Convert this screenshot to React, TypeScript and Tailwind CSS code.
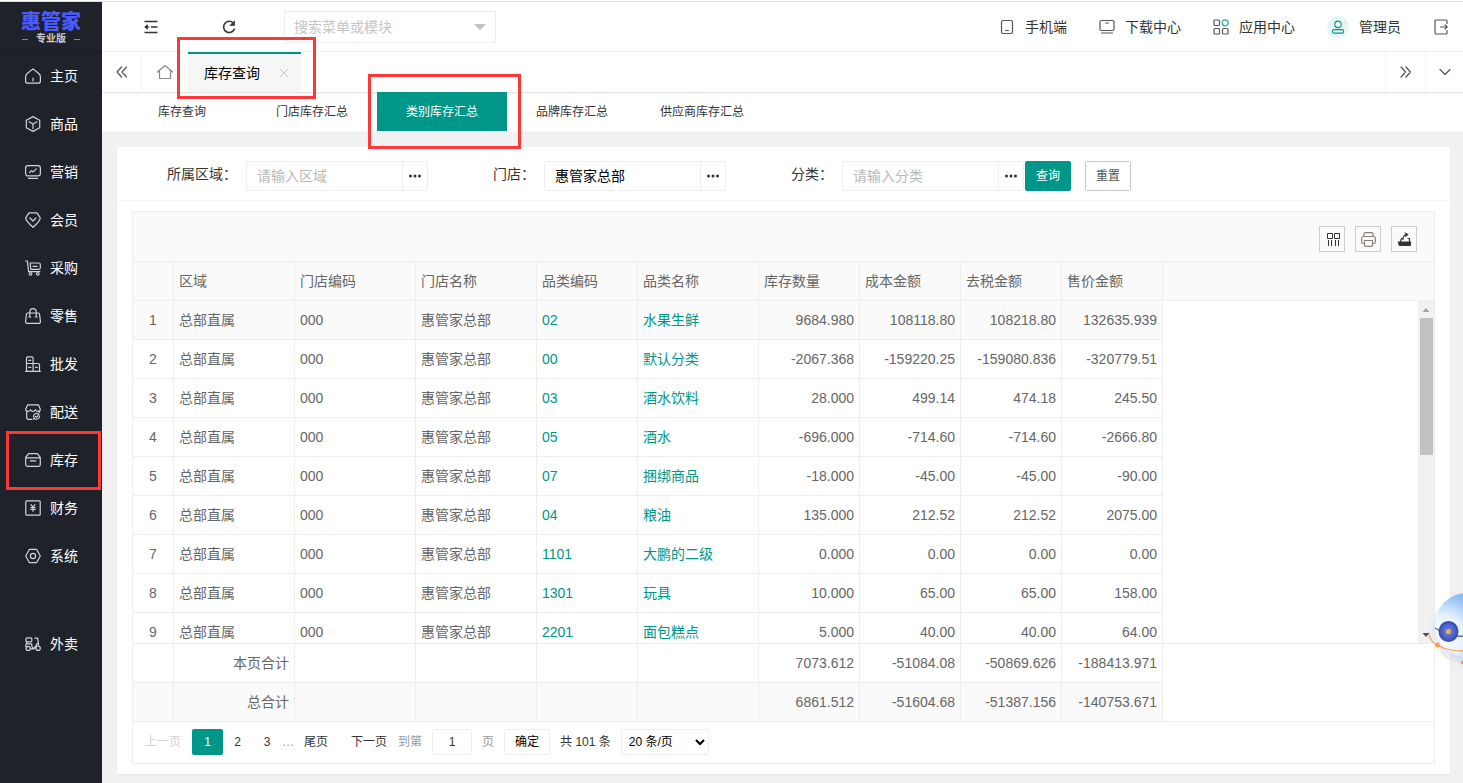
import type { ReactNode } from 'react';
import { clsx } from 'clsx';

type IconProps = { children: ReactNode; className?: string };

function Icon({ children, className = 'size-4' }: IconProps) {
  return (
    <svg
      viewBox="0 0 16 16"
      className={clsx('shrink-0', className)}
      fill="none"
      stroke="currentColor"
      strokeWidth="1.2"
      strokeLinecap="round"
      strokeLinejoin="round"
      aria-hidden="true"
    >
      {children}
    </svg>
  );
}

const menu = [
  {
    name: '主页',
    icon: <path d="M2.5 5.3 8 .9l5.500 4.400c1 .8 1.900 2 1.900 3.400v4.200c0 1.400-.9 2.300-2.300 2.300H2.900C1.500 15.200.6 14.300.6 12.900V8.700c0-1.400.9-2.600 1.900-3.400ZM8 10v3" />,
  },
  {
    name: '商品',
    icon: <path d="m8 .6 6.700 3.600v7.600L8 15.400l-6.700-3.600V4.200L8 .6ZM4 5.800l4 2.300 4-2.300M8 8.100v4.600" />,
  },
  {
    name: '营销',
    icon: <path d="M3 1.600h10c1.400 0 2.400 1 2.400 2.400v5.500c0 1.400-1 2.400-2.400 2.400H3C1.600 11.900.6 10.900.6 9.500V4C.6 2.600 1.600 1.600 3 1.600ZM4.500 8.700l2-2 1.700 1.200 3-3M3.500 14.400h9" />,
  },
  {
    name: '会员',
    icon: <path d="M4 .8h8l3.300 5.100c-.3 3-4.300 6.800-7.300 9.400C5 12.700 1 8.900.7 5.900L4 .8ZM5 6l3 3 3-3" />,
  },
  {
    name: '采购',
    icon: (
      <>
        <path d="M.6 1h1.800l1.200 10.600h11.200M5.300 3h8.500c.9 0 1.500.6 1.500 1.500v3.300c0 .9-.6 1.500-1.500 1.500H5.800L5.200 3ZM8 6.300h4" />
        <circle cx="5.500" cy="13.800" r="1.300" />
        <circle cx="12.800" cy="13.800" r="1.300" />
      </>
    ),
  },
  {
    name: '零售',
    icon: <path d="M2.600 5h10.800c.7 0 1 .3 1.100 1l.9 7c.2 1.500-.5 2.400-1.900 2.400h-11C1.100 15.400.4 14.500.6 13l.9-7c.1-.7.4-1 1.100-1ZM4.800 8.800V4.300C4.800 2.200 6 .7 8 .7s3.200 1.500 3.200 3.600v4.500M3.800 9h2M10.200 9h2" />,
  },
  {
    name: '批发',
    icon: <path d="M.6 15.300h14.800M1.500 15.300V2.200C1.500 1.300 2 .8 2.900.8h3.800c.9 0 1.400.5 1.400 1.400v13.100M8.100 7.500h5c.9 0 1.400.5 1.400 1.400v6.400M3.700 4.300h2.200M1.500 7.500h6.600M3.700 11.300h2.200M10.500 11.300h1.800" />,
  },
  {
    name: '配送',
    icon: (
      <>
        <path d="M7 15.300H3.400c-1 0-1.700-.7-1.700-1.700V7.400M14.300 7.400v1.100M2.600.8h10.800l1.900 4.400c0 1.300-.8 2.200-2.300 2.200-1.400 0-2.200-.7-2.500-1.700-.4 1-1.200 1.700-2.500 1.700s-2.100-.7-2.500-1.700C5.200 6.700 4.400 7.400 3 7.400 1.500 7.400.7 6.500.7 5.200L2.600.8Z" />
        <path d="M8.500 12.400a3 3 0 0 1 5.400-1.800M14.600 12a3 3 0 0 1-5.400 2M10.200 12.300l1.300 1 1.700-2M8.800 15.300v-1.500" />
      </>
    ),
  },
  {
    name: '库存',
    marked: true,
    icon: <path d="M3.600 1.600h8.800l2.900 3.700v7c0 1.300-.8 2.100-2.100 2.100H2.800c-1.300 0-2.100-.8-2.100-2.100v-7l2.900-3.700ZM.7 5.800h14.600M5.300 8.900h5.400" />,
  },
  {
    name: '财务',
    icon: <path d="M1.700.8h12.600c.6 0 .9.3.9.900v12.600c0 .6-.3.900-.9.900H1.700c-.6 0-.9-.3-.9-.9V1.700c0-.6.3-.9.900-.9ZM6 4.700l2 2.500 2-2.500M5.800 7.500h4.400M5.800 9.300h4.400M8 7.300v4" />,
  },
  {
    name: '系统',
    icon: (
      <>
        <path d="M4.500 1.300h7L15.300 8l-3.800 6.700h-7L.7 8l3.800-6.700Z" />
        <circle cx="8" cy="8" r="2.600" />
      </>
    ),
  },
];

const scooter = (
  <>
    <rect x="1" y="1.800" width="5.800" height="4" rx="1" />
    <path d="M.8 10.500V9.300C.8 8.300 1.400 7.800 2.300 7.800h4.500v2.500l1.400 2 2.700-.3M10 2.200h2.700l.9 7M5.300 12.800h3.500l3.600-5.500M1.500 5.800v2" />
    <circle cx="3.200" cy="12.400" r="2.100" />
    <circle cx="13.100" cy="12.200" r="2.200" />
  </>
);

const columns = ['', '区域', '门店编码', '门店名称', '品类编码', '品类名称', '库存数量', '成本金额', '去税金额', '售价金额'];

const rows = [
  ['02', '水果生鲜', '9684.980', '108118.80', '108218.80', '132635.939'],
  ['00', '默认分类', '-2067.368', '-159220.25', '-159080.836', '-320779.51'],
  ['03', '酒水饮料', '28.000', '499.14', '474.18', '245.50'],
  ['05', '酒水', '-696.000', '-714.60', '-714.60', '-2666.80'],
  ['07', '捆绑商品', '-18.000', '-45.00', '-45.00', '-90.00'],
  ['04', '粮油', '135.000', '212.52', '212.52', '2075.00'],
  ['1101', '大鹏的二级', '0.000', '0.00', '0.00', '0.00'],
  ['1301', '玩具', '10.000', '65.00', '65.00', '158.00'],
  ['2201', '面包糕点', '5.000', '40.00', '40.00', '64.00'],
];

const totals = [
  ['本页合计', '7073.612', '-51084.08', '-50869.626', '-188413.971'],
  ['总合计', '6861.512', '-51604.68', '-51387.156', '-140753.671'],
];

const subTabs = ['库存查询', '门店库存汇总', '类别库存汇总', '品牌库存汇总', '供应商库存汇总'];

const cell = 'h-[39px] border-r border-b border-[#eee] px-[5px] whitespace-nowrap';

function Mark({ className }: { className: string }) {
  return <span className={clsx('pointer-events-none absolute z-10 border-3 border-[#fd3838]', className)} />;
}

function Grid({ children, label }: { children: ReactNode; label: string }) {
  return (
    <table aria-label={label} className="w-[1030px] table-fixed border-separate border-spacing-0">
      <colgroup>
        <col className="w-[41px]" />
        <col className="w-[121px]" />
        <col className="w-[121px]" />
        <col className="w-[121px]" />
        <col className="w-[101px]" />
        <col className="w-[121px]" />
        <col className="w-[101px]" />
        <col className="w-[101px]" />
        <col className="w-[101px]" />
        <col className="w-[101px]" />
      </colgroup>
      {children}
    </table>
  );
}

function Sidebar() {
  return (
    <aside className="flex w-[102px] shrink-0 flex-col bg-[#20222a] text-white">
      <div className="flex h-[50px] flex-col items-center pt-[9px] shadow-[0_1px_2px_rgba(0,0,0,0.2)]">
        <div className="text-[20px] leading-[22px] font-black text-[#4a5cff]">惠管家</div>
        <div className="flex items-center gap-2 text-[10px] leading-3 font-bold text-[#ccc]">
          <span className="h-px w-1.5 bg-[#888]" />
          专业版
          <span className="h-px w-1.5 bg-[#888]" />
        </div>
      </div>
      <nav className="flex flex-col">
        {menu.map((item) => (
          <a key={item.name} href="#" className="relative flex h-12 items-center gap-[9px] pl-[25px]">
            <Icon className="size-4 text-[#d2d3d5]">{item.icon}</Icon>
            {item.name}
            {item.marked && <Mark className="-top-[5px] right-px -bottom-[6px] left-1.5" />}
          </a>
        ))}
        <a href="#" className="mt-10 flex h-12 items-center gap-[9px] pl-[25px]">
          <Icon className="size-4 text-[#d2d3d5]">{scooter}</Icon>
          外卖
        </a>
      </nav>
    </aside>
  );
}

function Header() {
  return (
    <header className="flex h-[50px] shrink-0 items-center border-b border-[#f2f2f2] bg-white pr-3.5 pl-[41px] text-[#333]">
      <button type="button" aria-label="收起菜单">
        <Icon>
          <path d="M1.500 2.600h13M8 8h6.500M1.500 13.400h13" strokeWidth="1.500" strokeLinecap="butt" />
          <path d="M2 8h4M4 6 2 8l2 2Z" strokeWidth="1" fill="currentColor" />
        </Icon>
      </button>
      <button type="button" aria-label="刷新" className="ml-[62px]">
        <Icon>
          <path d="M13.300 10.200A5.600 5.600 0 1 1 12.200 4" strokeWidth="1.600" />
          <path d="M13.600 2v4.500H9Z" fill="currentColor" strokeWidth=".6" />
        </Icon>
      </button>
      <div className="ml-[47px] flex h-8 w-[212px] items-center border border-[#eee] px-[9px]">
        <input
          type="text"
          aria-label="搜索菜单或模块"
          placeholder="搜索菜单或模块"
          className="min-w-0 flex-1 outline-none placeholder:text-[#c4c4c4]"
        />
        <svg viewBox="0 0 12 6" className="h-1.5 w-3 fill-[#c2c2c2]" aria-hidden="true">
          <path d="M0 0h12L6 6Z" />
        </svg>
      </div>
      <div className="ml-auto flex items-center gap-8">
        <a href="#" className="flex items-center gap-2.5">
          <Icon className="size-4 text-[#555]">
            <rect x="2.500" y="1.500" width="11" height="13" rx="1.500" />
            <path d="M6.500 11.500h3" />
          </Icon>
          手机端
        </a>
        <a href="#" className="flex items-center gap-2.5">
          <Icon className="size-4 text-[#555]">
            <rect x="1" y="1.500" width="14" height="10" rx="1.500" />
            <path d="M6.500 4h3M2.500 14h11" />
          </Icon>
          下载中心
        </a>
        <a href="#" className="flex items-center gap-2.5">
          <Icon className="size-4 text-[#555]">
            <rect x="1" y="1" width="5.500" height="5.500" rx="1" />
            <rect x="1" y="9.500" width="5.500" height="5.500" rx="1" />
            <rect x="9.500" y="9.500" width="5.500" height="5.500" rx="1" />
            <circle cx="12.200" cy="3.800" r="3" stroke="#26a69a" />
          </Icon>
          应用中心
        </a>
        <a href="#" className="flex items-center gap-2.5">
          <span className="flex size-[22px] items-center justify-center rounded-full bg-[#e8f5f4] text-[#009688]">
            <Icon className="size-3.5">
              <circle cx="8" cy="5" r="3.700" />
              <rect x="1.500" y="11" width="13" height="4" rx="2" />
            </Icon>
          </span>
          管理员
        </a>
        <button type="button" aria-label="退出">
          <Icon className="size-4 text-[#555]">
            <path d="M14 4.500V2c0-.6-.4-1-1-1H3c-.6 0-1 .4-1 1v12c0 .6.400 1 1 1h10c.6 0 1-.4 1-1v-2.500M7.500 8H14M12 5.800 14.200 8 12 10.200" />
          </Icon>
        </button>
      </div>
    </header>
  );
}

function TabBar() {
  return (
    <div className="relative flex h-10 shrink-0 bg-white text-[#555] shadow-[0_1px_2px_rgba(0,0,0,0.15)]">
      <button type="button" aria-label="向左" className="flex w-10 items-center justify-center border-r border-[#f2f2f2]">
        <Icon>
          <path d="M7.500 3 3 8l4.500 5M12.500 3 8 8l4.500 5" />
        </Icon>
      </button>
      <button type="button" aria-label="首页" className="flex w-[46px] items-center justify-center text-[#888]">
        <Icon>
          <path d="M.5 8 8 1.500 15.500 8M2.500 6.500v8h11v-8" />
        </Icon>
      </button>
      <div className="relative flex w-[113px] items-center gap-[18px] border-t-2 border-[#009688] bg-[#f6f6f6] pl-4 text-black">
        库存查询
        <button type="button" aria-label="关闭" className="text-[#c2c2c2]">
          <Icon className="size-3">
            <path d="m3 3 10 10M13 3 3 13" />
          </Icon>
        </button>
        <Mark className="-top-[17px] -right-[15px] -bottom-[7px] -left-[11px]" />
      </div>
      <button type="button" aria-label="向右" className="ml-auto flex w-10 items-center justify-center border-l border-[#f2f2f2]">
        <Icon>
          <path d="m3 3 4.500 5L3 13M8 3l4.500 5L8 13" />
        </Icon>
      </button>
      <button type="button" aria-label="更多" className="flex w-[38px] items-center justify-center border-l border-[#f2f2f2]">
        <Icon>
          <path d="m3 5.500 5 5 5-5" />
        </Icon>
      </button>
    </div>
  );
}

function Field({ id, label, placeholder, value }: { id: string; label: string; placeholder: string; value?: string }) {
  return (
    <div className="flex w-[298px] items-start">
      <label htmlFor={id} className="flex-1 pr-[9px] text-right leading-[26px]">
        {label}：
      </label>
      <div className="flex h-[30px] w-[182px] rounded-xs border border-[#eee]">
        <input
          id={id}
          type="text"
          placeholder={placeholder}
          defaultValue={value}
          className="min-w-0 flex-1 pl-2.5 text-black outline-none placeholder:text-[#b8b8b8]"
        />
        <button type="button" aria-label={`选择${label}`} className="flex w-[25px] items-center justify-center border-l border-[#eee]">
          <svg viewBox="0 0 12 4" className="h-1 w-3 fill-[#333]" aria-hidden="true">
            <circle cx="1.500" cy="2" r="1.500" />
            <circle cx="6" cy="2" r="1.500" />
            <circle cx="10.500" cy="2" r="1.500" />
          </svg>
        </button>
      </div>
    </div>
  );
}

function Filters() {
  return (
    <form className="flex h-[54px] shrink-0 items-start border-b border-[#f6f6f6] pt-3.5 pl-[13px] text-[#333]">
      <Field id="area" label="所属区域" placeholder="请输入区域" />
      <Field id="store" label="门店" placeholder="请输入门店" value="惠管家总部" />
      <Field id="category" label="分类" placeholder="请输入分类" />
      <button type="button" className="ml-px h-[30px] w-[46px] rounded-xs bg-[#009688] text-xs text-white">
        查询
      </button>
      <button type="button" className="ml-3.5 h-[30px] w-[46px] rounded-xs border border-[#c9c9c9] text-xs text-[#555]">
        重置
      </button>
    </form>
  );
}

function Toolbar() {
  const button = 'flex size-[26px] items-center justify-center border border-[#ccc] text-[#333]';
  return (
    <div className="flex h-[50px] shrink-0 items-center justify-end gap-2.5 border-b border-[#eee] bg-[#fafafa] pt-1 pr-[17px]">
      <button type="button" aria-label="筛选列" className={button}>
        <Icon className="size-4">
          <path d="M3.500 2.500h5v5h-5ZM10.500 2.500h5v5h-5ZM4.500 9v6M7.500 9v6M11.500 9v6M14.500 9v6" strokeWidth="1" strokeLinecap="butt" strokeLinejoin="miter" />
        </Icon>
      </button>
      <button type="button" aria-label="打印" className={button}>
        <Icon className="size-4 text-[#8a8079]">
          <path d="M4 5.500V3C4 2.200 4.500 1.700 5.300 1.700h6.400c.8 0 1.300.5 1.300 1.300v2.500M4 12.500H3.200c-1 0-1.500-.6-1.500-1.500V7.500c0-1.200.8-2 2-2h9.600c1.200 0 2 .8 2 2V11c0 .9-.5 1.500-1.500 1.500H13M4.500 9.500h8v4.500c0 .8-.5 1.300-1.300 1.300H5.800c-.8 0-1.300-.5-1.300-1.300V9.500Z" />
        </Icon>
      </button>
      <button type="button" aria-label="导出" className={button}>
        <Icon className="size-4">
          <path d="M2.500 11h12v2.700c0 .5-.3.800-.8.800H4.200c-.7 0-1.200-.5-1.200-1.200Z" fill="currentColor" />
          <path d="M4.500 10.500 5.500 7.500h1.500M13.500 10.500v-3H12M7 8.500C7 6 8 4 10.500 3.500" />
          <path d="m9.300 1.800 3 1.700-2.500 2.200Z" fill="currentColor" strokeWidth=".5" />
        </Icon>
      </button>
    </div>
  );
}

function DataTable() {
  return (
    <div className="flex min-h-0 flex-1 flex-col text-[#666]">
      <div className="shrink-0 border-b border-[#eee] bg-[#fafafa]">
        <Grid label="表头">
          <thead>
            <tr>
              {columns.map((name) => (
                <th key={name} className="h-[38px] border-r border-[#eee] px-[5px] text-left font-normal">
                  {name}
                </th>
              ))}
            </tr>
          </thead>
        </Grid>
      </div>
      <div className="flex min-h-0 flex-1">
        <div className="flex-1 overflow-hidden">
          <Grid label="类别库存汇总">
            <tbody>
              {rows.map(([code, name, ...numbers], i) => (
                <tr key={code} className={clsx(i === 0 && 'bg-[#fafafa]')}>
                  <td className={clsx(cell, 'text-center')}>{i + 1}</td>
                  <td className={cell}>总部直属</td>
                  <td className={cell}>000</td>
                  <td className={cell}>惠管家总部</td>
                  <td className={clsx(cell, 'text-[#009688]')}>{code}</td>
                  <td className={clsx(cell, 'text-[#009688]')}>{name}</td>
                  {numbers.map((n, j) => (
                    <td key={j} className={clsx(cell, 'text-right')}>
                      {n}
                    </td>
                  ))}
                </tr>
              ))}
            </tbody>
          </Grid>
        </div>
        <div className="flex w-4 flex-col items-center bg-[#f1f1f1]">
          <svg viewBox="0 0 16 17" className="h-[17px] w-4 fill-[#a3a3a3]" aria-hidden="true">
            <path d="M8 7 11.500 11h-7Z" />
          </svg>
          <div className="h-[137px] w-[13px] bg-[#c1c1c1]" />
          <svg viewBox="0 0 16 17" className="mt-auto h-[17px] w-4 fill-[#505050]" aria-hidden="true">
            <path d="M4.500 7h7L8 11Z" />
          </svg>
        </div>
      </div>
      <div className="shrink-0 border-t border-[#eee]">
        <Grid label="合计">
          <tbody>
            {totals.map(([name, ...numbers], i) => (
              <tr key={name} className={clsx(i === 1 && 'bg-[#fafafa]')}>
                <td className={cell} />
                <td className={clsx(cell, 'text-right')}>{name}</td>
                <td className={cell} />
                <td className={cell} />
                <td className={cell} />
                <td className={cell} />
                {numbers.map((n, j) => (
                  <td key={j} className={clsx(cell, 'text-right')}>
                    {n}
                  </td>
                ))}
              </tr>
            ))}
          </tbody>
        </Grid>
      </div>
    </div>
  );
}

function Pagination() {
  return (
    <div className="-mt-px flex h-[42px] shrink-0 items-center border-t border-[#eee] pb-0.5 pl-px text-xs text-[#333]">
      <button type="button" disabled className="px-[11px] text-[#d2d2d2]">
        上一页
      </button>
      <button type="button" className="h-[26px] w-[31px] rounded-xs bg-[#009688] text-white">
        1
      </button>
      <button type="button" className="w-[29px]">
        2
      </button>
      <button type="button" className="w-[30px]">
        3
      </button>
      <span className="w-[11px] text-[#999]">…</span>
      <button type="button" className="pr-3 pl-[11px]">
        尾页
      </button>
      <button type="button" className="px-[11px]">
        下一页
      </button>
      <label htmlFor="page" className="pr-2.5 text-[#999]">
        到第
      </label>
      <input id="page" type="text" defaultValue="1" className="h-[26px] w-10 rounded-xs border border-[#eee] text-center" />
      <span className="px-2.5 text-[#999]">页</span>
      <button type="button" className="h-[26px] w-[46px] rounded-xs border border-[#eee] text-black">
        确定
      </button>
      <span className="px-2.5">共 101 条</span>
      <select aria-label="每页条数" className="h-[26px] w-[88px] rounded-xs border border-[#eee] bg-white pl-[3px] text-black">
        <option>20 条/页</option>
      </select>
    </div>
  );
}

function Assistant() {
  return (
    <button type="button" aria-label="智能助手" className="absolute right-0 bottom-28 z-20">
      <svg viewBox="0 0 35 80" className="h-20 w-[35px]" aria-hidden="true">
        <defs>
          <radialGradient id="ball" gradientUnits="userSpaceOnUse" cx="14" cy="46" r="48">
            <stop offset="0" stopColor="#ffffff" />
            <stop offset="0.45" stopColor="#e6f3ff" />
            <stop offset="0.9" stopColor="#8dbcf3" />
          </radialGradient>
          <radialGradient id="eye">
            <stop offset="0" stopColor="#6b86e6" />
            <stop offset="0.6" stopColor="#4c66cc" />
            <stop offset="1" stopColor="#3548a6" />
          </radialGradient>
          <filter id="soft" x="-50%" y="-50%" width="200%" height="200%">
            <feGaussianBlur stdDeviation="3" />
          </filter>
        </defs>
        <circle cx="39" cy="39" r="33" fill="#b9c6f5" opacity=".5" filter="url(#soft)" />
        <circle cx="39" cy="34" r="32" fill="url(#ball)" />
        <path d="M7 37c8 5 19 9 28 8" fill="none" stroke="#5c6db4" strokeWidth="1.400" />
        <ellipse cx="20.500" cy="40.500" rx="10" ry="10.500" fill="url(#eye)" />
        <circle cx="20.500" cy="40.500" r="2.600" fill="#f3a94e" />
        <path d="M1 43c1 10 15 17 34 17" fill="none" stroke="#f7a248" strokeWidth="1.300" />
        <path d="M13 57c1 9 10 13 22 14" fill="none" stroke="#f9dcc0" strokeWidth="1.200" />
        <circle cx="9.500" cy="54" r="2.400" fill="#f9a03f" />
        <circle cx="34.500" cy="71.500" r="1.800" fill="#f9a03f" />
      </svg>
    </button>
  );
}

export default function App() {
  return (
    <div className="relative flex h-screen flex-col overflow-hidden bg-white pt-px font-['Liberation_Sans','Noto_Sans_CJK_SC',sans-serif] text-sm">
      <div className="h-px shrink-0 bg-[#dfe1e1]" />
      <div className="flex min-h-0 flex-1">
        <Sidebar />
        <div className="flex min-w-0 flex-1 flex-col bg-[#f1f1f1]">
          <Header />
          <TabBar />
          <nav className="flex h-10 shrink-0 border-b border-[#f6f6f6] bg-white pl-[15px] text-xs text-[#333]">
            {subTabs.map((name) => {
              const active = name === '类别库存汇总';
              return (
                <a
                  key={name}
                  href="#"
                  className={clsx('flex w-[130px] items-center justify-center', active && 'relative bg-[#009688] text-white')}
                >
                  {name}
                  {active && <Mark className="-top-[18px] -right-3.5 -bottom-[18px] -left-[9px]" />}
                </a>
              );
            })}
          </nav>
          <main className="mt-[15px] mr-[13px] mb-[9px] ml-[15px] flex min-h-0 flex-1 flex-col rounded-xs bg-white shadow-[0_1px_2px_rgba(0,0,0,0.05)]">
            <Filters />
            <div className="mx-[15px] my-2.5 flex min-h-0 flex-1 flex-col border border-[#eee]">
              <Toolbar />
              <DataTable />
              <Pagination />
            </div>
          </main>
        </div>
      </div>
      <Assistant />
    </div>
  );
}
